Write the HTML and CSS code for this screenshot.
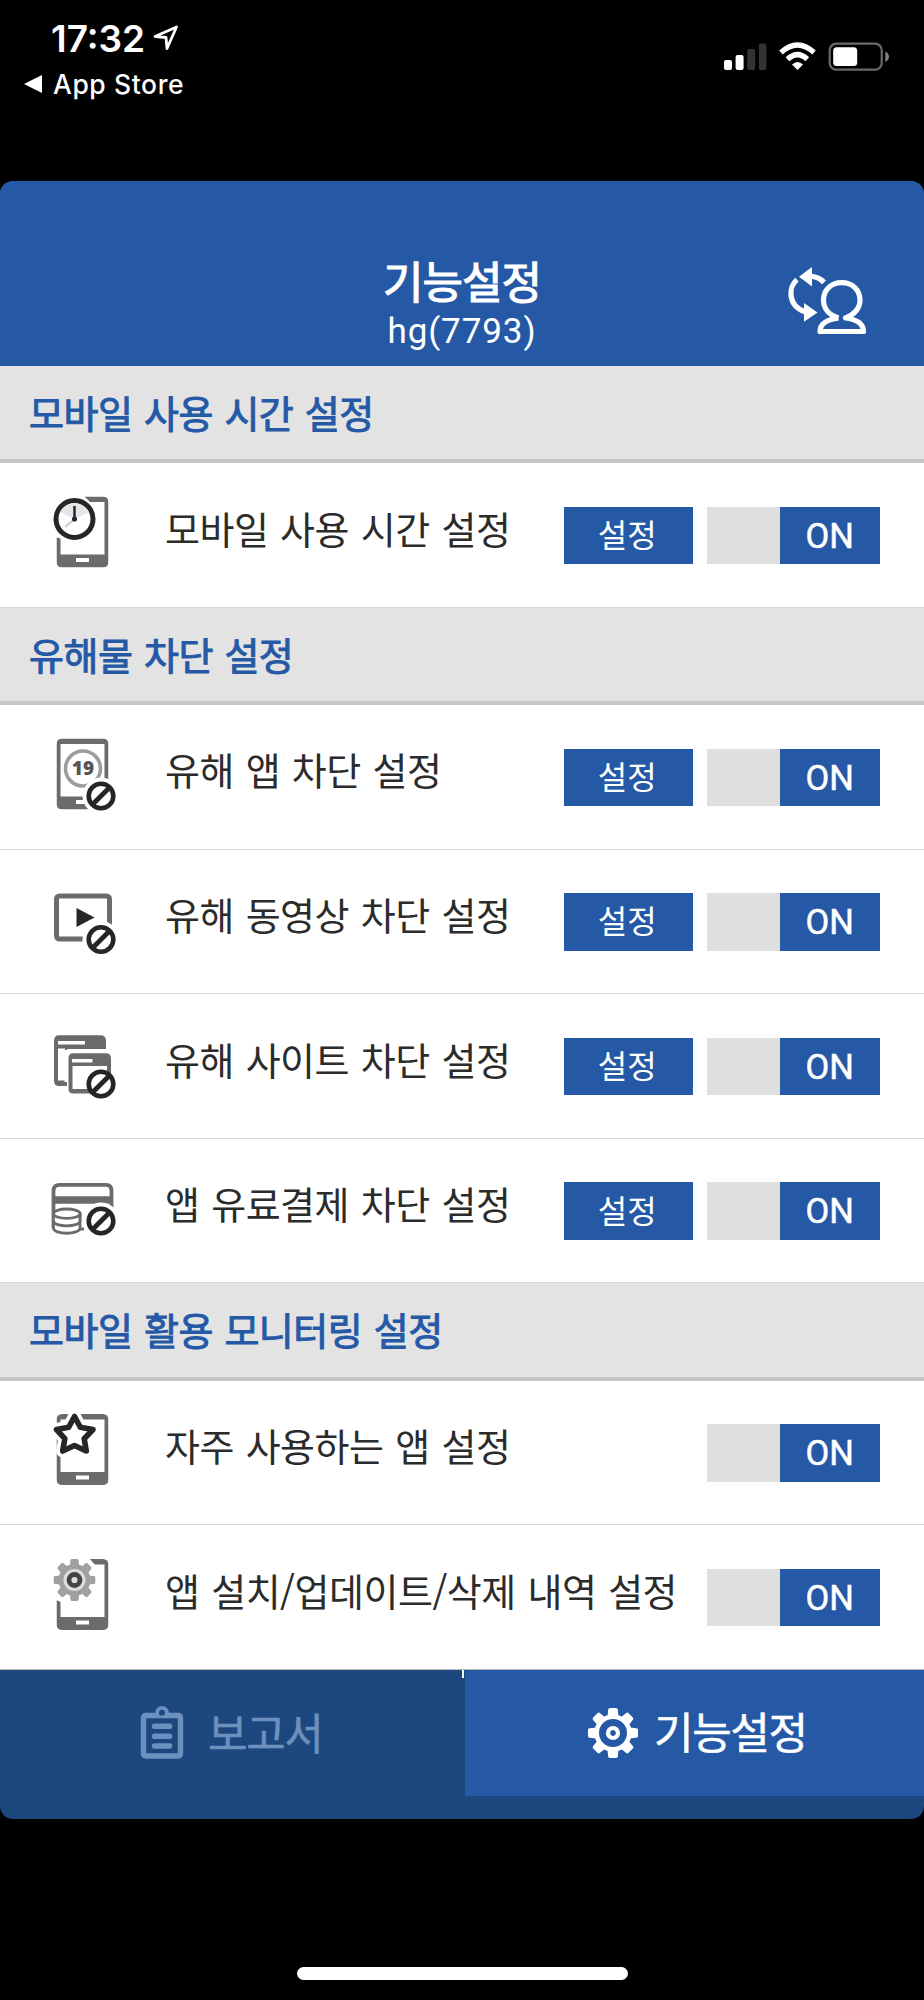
FILE: index.html
```html
<!DOCTYPE html>
<html lang="ko">
<head>
    <meta charset="UTF-8">
    <meta name="viewport" content="width=device-width, initial-scale=1.0">
    <title>기능설정</title>
    <link rel="stylesheet" href="styles.css">
</head>
<body>
    <!-- Shared icon parts -->
    <svg class="defs" width="0" height="0">
        <symbol id="phone" viewBox="0 0 52 71">
            <path fill="#6b6b6b" fill-rule="evenodd" d="M6 0H46Q52 0 52 6V65Q52 71 46 71H6Q0 71 0 65V6Q0 0 6 0ZM4 5.5V58H48V5.5ZM19.5 61.5V65.5H32.5V61.5Z"/>
        </symbol>
        <symbol id="ban" viewBox="0 0 38 38">
            <circle cx="19" cy="19" r="18.5" fill="#fff"/>
            <circle cx="19" cy="19" r="12.3" fill="#fff" stroke="#262626" stroke-width="4.6"/>
            <path d="M10.5 27.5L27.5 10.5" stroke="#262626" stroke-width="4.8"/>
        </symbol>
        <symbol id="teeth" viewBox="-25 -25 50 50">
            <path id="tooth" d="M-5.5 -16L-4.8 -23.5Q-4.5 -25 -3 -25H3Q4.5 -25 4.8 -23.5L5.5 -16Z"/>
            <use href="#tooth" transform="rotate(45)"/>
            <use href="#tooth" transform="rotate(90)"/>
            <use href="#tooth" transform="rotate(135)"/>
            <use href="#tooth" transform="rotate(180)"/>
            <use href="#tooth" transform="rotate(225)"/>
            <use href="#tooth" transform="rotate(270)"/>
            <use href="#tooth" transform="rotate(315)"/>
        </symbol>
    </svg>

    <!-- Status bar -->
    <div class="status">
        <div class="status-left">
            <div class="clock">
                <span>17:32</span>
                <svg width="26" height="26" viewBox="0 0 26 26"><path d="M2 11.5L23.5 2L14 23.5L13 12.5Z" fill="none" stroke="#fff" stroke-width="2.8" stroke-linejoin="round"/></svg>
            </div>
            <div class="back">
                <svg width="18" height="18" viewBox="0 0 18 18"><path d="M0 9L18 0V18Z" fill="#fff"/></svg>
                <span>App Store</span>
            </div>
        </div>
        <svg class="status-icons" width="166" height="30" viewBox="724 42 166 30">
            <rect x="724" y="60" width="8" height="10" rx="2" fill="#fff"/>
            <rect x="735.6" y="55" width="8" height="15" rx="2" fill="#fff"/>
            <rect x="747.2" y="49" width="8" height="21" rx="2" fill="#333"/>
            <rect x="758.8" y="43.5" width="7.6" height="26.5" rx="2" fill="#333"/>
            <path d="M781 52.5Q797.5 37.5 814 52.5M787.5 59.3Q797.5 50 807.3 59.3" fill="none" stroke="#fff" stroke-width="5.4"/>
            <path d="M792 64.5Q797.5 59.5 803 64.5L797.5 70Z" fill="#fff"/>
            <rect x="829.7" y="43.7" width="52" height="26" rx="6.5" fill="none" stroke="#6a6a6a" stroke-width="2.2"/>
            <rect x="833.2" y="47.3" width="24" height="18.8" rx="3.5" fill="#fff"/>
            <path d="M885.3 51.5Q889 53.5 889 56.7Q889 60 885.3 62Z" fill="#808080"/>
        </svg>
    </div>

    <div class="app">
        <header class="header">
            <h1>기능설정</h1>
            <p>hg(7793)</p>
            <svg class="switch-user" width="82" height="70" viewBox="786 266 82 70">
                <g fill="none" stroke="#fff" stroke-width="5.2">
                    <path d="M797 279.7C788.5 286.4 787 305.2 805 311.9"/>
                    <path d="M809 276.5Q818 276 824 282.4"/>
                    <path stroke-linejoin="round" d="M838.5 318C829 315 823.5 308.3 823.5 300.3C823.5 290 831 282.7 841.7 282.7C852.5 282.7 860 290 860 300.3C860 308.3 854 315 845.5 318C857 319.5 863.5 323.5 863.5 331.5H820C820 323.5 827 319.5 838.5 318"/>
                </g>
                <path fill="#fff" d="M799 276.7L812 267V286.5ZM817.5 312.4L804 303V321.8Z"/>
            </svg>
        </header>

        <h2 class="section">모바일 사용 시간 설정</h2>
        <div class="row">
            <svg class="icon" width="70" height="80" viewBox="0 0 70 80">
                <use href="#phone" x="6.5" y=".5" width="52" height="71"/>
                <path d="M0 0H34L42 8L41 30L24 46L5 41H0Z" fill="#fff"/>
                <circle cx="24.5" cy="23" r="18.5" fill="#fff" stroke="#262626" stroke-width="5"/>
                <path d="M24.5 23L10 16Q15 7.5 24.5 7.5T39 16Z" fill="#e6e6e6"/>
                <path d="M24.5 23L15 31" stroke="#ccc" stroke-width="2"/>
                <path d="M24.5 10V23" stroke="#262636" stroke-width="2.5"/>
                <circle cx="24.5" cy="23" r="2.6" fill="#262636"/>
            </svg>
            <span class="label">모바일 사용 시간 설정</span>
            <button class="set">설정</button>
            <div class="toggle"><span>ON</span></div>
        </div>

        <h2 class="section">유해물 차단 설정</h2>
        <div class="row">
            <svg class="icon" width="70" height="80" viewBox="0 0 70 80">
                <use href="#phone" x="6.5" y="1.5" width="52" height="71"/>
                <circle cx="33" cy="31.5" r="17.5" fill="none" stroke="#9c9c9c" stroke-width="3.6"/>
                <text class="age" x="33" y="38">19</text>
                <use href="#ban" x="32" y="40" width="38" height="38"/>
            </svg>
            <span class="label">유해 앱 차단 설정</span>
            <button class="set">설정</button>
            <div class="toggle"><span>ON</span></div>
        </div>
        <div class="row">
            <svg class="icon" width="70" height="80" viewBox="0 0 70 80">
                <rect x="6.5" y="14" width="53" height="43" rx="3" fill="none" stroke="#6b6b6b" stroke-width="5"/>
                <path d="M26.5 26L44.5 35.5L26.5 45Z" fill="#262626"/>
                <use href="#ban" x="32" y="38.5" width="38" height="38"/>
            </svg>
            <span class="label">유해 동영상 차단 설정</span>
            <button class="set">설정</button>
            <div class="toggle"><span>ON</span></div>
        </div>
        <div class="row">
            <svg class="icon" width="70" height="80" viewBox="0 0 70 80">
                <path fill="#6b6b6b" fill-rule="evenodd" d="M9 8.3H50.5Q56 8.3 56 14V22H17V59H9Q4 59 4 53.5V14Q4 8.3 9 8.3ZM8 21.5V53.5H15V21.5ZM8 14V17.5H35V14Z"/>
                <rect x="14.5" y="23" width="50" height="32" fill="#fff"/>
                <path fill="#6b6b6b" fill-rule="evenodd" d="M23 26.3H56Q61 26.3 61 31.5V61.5Q61 66.5 56 66.5H23Q18.5 66.5 18.5 61.5V31.5Q18.5 26.3 23 26.3ZM22.5 39V62H57V39ZM22 32V35.5H42.5V32Z"/>
                <circle cx="51" cy="57" r="12.3" fill="#fff" stroke="#262626" stroke-width="4.6"/>
                <path d="M42.5 65.5L59.5 48.5" stroke="#262626" stroke-width="4.8"/>
            </svg>
            <span class="label">유해 사이트 차단 설정</span>
            <button class="set">설정</button>
            <div class="toggle"><span>ON</span></div>
        </div>
        <div class="row">
            <svg class="icon" width="70" height="80" viewBox="0 0 70 80">
                <path d="M3.5 57V20Q3.5 13.8 9.5 13.8H56Q61.5 13.8 61.5 20V42" fill="none" stroke="#6b6b6b" stroke-width="3.8"/>
                <path d="M3 25.2H62V32.7H3Z" fill="#6b6b6b"/>
                <path d="M28 58H34" stroke="#6b6b6b" stroke-width="3"/>
                <g fill="#fff" stroke="#6b6b6b" stroke-width="2.8">
                    <path d="M3.5 43V57C3.5 64 30 64 30 57V43"/>
                    <path d="M3.5 50C3.5 56.5 30 56.5 30 50V43H3.5Z"/>
                    <ellipse cx="16.8" cy="42.7" rx="13.3" ry="4.7"/>
                </g>
                <use href="#ban" x="32" y="31" width="38" height="38"/>
            </svg>
            <span class="label">앱 유료결제 차단 설정</span>
            <button class="set">설정</button>
            <div class="toggle"><span>ON</span></div>
        </div>

        <h2 class="section">모바일 활용 모니터링 설정</h2>
        <div class="row">
            <svg class="icon" width="70" height="80" viewBox="0 0 70 80">
                <use href="#phone" x="6.5" y="1" width="52" height="71"/>
                <path d="M24.5 3.5L30.3 14.3L43 16.5L34.2 25.7L36.3 38L24.5 32.5L12.7 38L14.8 25.7L6.5 16.5L18.7 14.3Z" fill="#fff" stroke="#fff" stroke-width="13" stroke-linejoin="round"/>
                <path d="M24.5 3.5L30.3 14.3L43 16.5L34.2 25.7L36.3 38L24.5 32.5L12.7 38L14.8 25.7L6.5 16.5L18.7 14.3Z" fill="#fff" stroke="#262626" stroke-width="5.6" stroke-linejoin="round"/>
            </svg>
            <span class="label">자주 사용하는 앱 설정</span>
            <div class="toggle"><span>ON</span></div>
        </div>
        <div class="row">
            <svg class="icon" width="70" height="80" viewBox="0 0 70 80">
                <use href="#phone" x="6.5" y="1" width="52" height="71"/>
                <path d="M0 0H39L46 8V30L26 46L13 45L4 41H0Z" fill="#fff"/>
                <use href="#teeth" x="3.5" y="1" width="42" height="42" fill="#a0a0a0"/>
                <circle cx="24.5" cy="22" r="13.5" fill="#ddd" stroke="#a0a0a0" stroke-width="5"/>
                <circle cx="24.5" cy="22" r="5.5" fill="#ddd" stroke="#444" stroke-width="4.8"/>
            </svg>
            <span class="label">앱 설치/업데이트/삭제 내역 설정</span>
            <div class="toggle"><span>ON</span></div>
        </div>

        <!-- Bottom tabs -->
        <nav class="tabs">
            <a class="tab">
                <svg width="44" height="54" viewBox="140 1706 44 54">
                    <rect x="143.5" y="1715.5" width="37" height="40.5" rx="2" fill="none" stroke="#6c91be" stroke-width="5.4"/>
                    <path d="M155 1715V1713A7 7 0 0 1 169 1713V1715Z" fill="#6c91be"/>
                    <circle cx="162" cy="1712.7" r="3" fill="#1d477f"/>
                    <path d="M154.5 1726.3H169.5M154.5 1736.2H169.5M154.5 1746H169.5" stroke="#6c91be" stroke-width="5.6" stroke-linecap="round"/>
                </svg>
                <span>보고서</span>
            </a>
            <a class="tab active">
                <svg width="50" height="50" viewBox="-25 -25 50 50">
                    <use href="#teeth" x="-25" y="-25" width="50" height="50" fill="#fff"/>
                    <circle r="16.3" fill="#2559a6" stroke="#fff" stroke-width="4.6"/>
                    <circle r="5" fill="none" stroke="#fff" stroke-width="4.2"/>
                </svg>
                <span>기능설정</span>
            </a>
        </nav>
    </div>

    <div class="home-bar"></div>
</body>
</html>
```
FILE: styles.css
```css
body {
    margin: 0;
    height: 2000px;
    background-color: #000;
    font-family: "Noto Sans CJK KR", sans-serif;
    overflow: hidden;
}

.defs {
    display: block;
}

/* Status bar */
.status {
    display: flex;
    justify-content: space-between;
    align-items: flex-start;
    height: 180.5px;
    padding: 0 34px 0 24px;
    box-sizing: border-box;
    color: #fff;
    font-family: Inter, sans-serif;
}

.clock {
    display: flex;
    align-items: center;
    gap: 8px;
    height: 40px;
    margin-top: 18px;
    padding-left: 27px;
    font-size: 37px;
    font-weight: 600;
}

.back {
    display: flex;
    align-items: center;
    gap: 11px;
    height: 30px;
    margin-top: 11px;
    font-size: 26.5px;
    font-weight: 500;
    letter-spacing: 0.6px;
}

.status-icons {
    margin-top: 42px;
}

.app {
    height: 1638.5px;
    border-radius: 13px;
    background-color: #1d477f;
    overflow: hidden;
}

.header {
    position: relative;
    height: 185.5px;
    padding-top: 69px;
    box-sizing: border-box;
    background-color: #2559a6;
    color: #fff;
    text-align: center;
}

.header h1 {
    margin: 0;
    height: 61px;
    line-height: 60px;
    font-size: 44px;
    font-weight: 400;
    letter-spacing: -1px;
    -webkit-text-stroke: 1.2px #fff;
}

.header p {
    margin: 0;
    height: 42px;
    line-height: 42px;
    font-family: Roboto, sans-serif;
    font-size: 35px;
    font-weight: 400;
    letter-spacing: 0.9px;
}

.switch-user {
    position: absolute;
    left: 786px;
    top: 85.5px;
}

.section {
    height: 97.25px;
    margin: 0;
    padding-left: 29px;
    box-sizing: border-box;
    border-bottom: 4px solid #c6c6c6;
    background-color: #e3e3e3;
    color: #2559a6;
    font-size: 38px;
    font-weight: 400;
    letter-spacing: -0.5px;
    word-spacing: 1.4px;
    line-height: 92px;
    -webkit-text-stroke: 1px #2559a6;
}

.row {
    display: flex;
    align-items: center;
    height: 144.6px;
    padding: 1px 44px 0 50px;
    box-sizing: border-box;
    border-bottom: 1px solid #d8d8d8;
    background-color: #fff;
}

.row:nth-last-child(2) {
    border-bottom-color: #b5b5b8;
}

.icon {
    flex: none;
    margin-right: 45px;
}

.age {
    font-family: "Open Sans", sans-serif;
    font-size: 19px;
    font-weight: 800;
    fill: #555;
    text-anchor: middle;
}

.label {
    flex: 1;
    padding-bottom: 16px;
    color: #2b2b2b;
    font-size: 38px;
    letter-spacing: -0.5px;
    word-spacing: 1.6px;
    line-height: 50px;
    white-space: nowrap;
}

.set {
    width: 129.5px;
    height: 57.5px;
    margin: 0 14px 0 0;
    padding: 0 2px 4px 0;
    border: none;
    background-color: #2559a6;
    color: #fff;
    font-family: inherit;
    font-size: 32px;
    line-height: 53px;
}

.toggle {
    display: flex;
    justify-content: flex-end;
    width: 173px;
    height: 57.5px;
    background-color: #dfdfdf;
}

.toggle span {
    width: 100.5px;
    background-color: #2559a6;
    color: #fff;
    font-family: Roboto, sans-serif;
    font-size: 34.5px;
    font-weight: 400;
    line-height: 59px;
    text-align: center;
    -webkit-text-stroke: 0.5px #fff;
}

/* Bottom tabs */
.tabs {
    display: flex;
    align-items: flex-start;
}

.tab {
    display: flex;
    align-items: center;
    height: 126.5px;
    box-sizing: border-box;
    color: #6c91be;
    font-size: 43px;
    letter-spacing: -1.4px;
}

.tab:first-child {
    position: relative;
    width: 465px;
    padding-left: 140px;
    gap: 24px;
}

.tab:first-child span {
    padding-bottom: 4px;
}

/* divider tick between the tabs */
.tab:first-child::after {
    content: "";
    position: absolute;
    top: 0;
    right: 1px;
    width: 2px;
    height: 8px;
    background-color: #fff;
}

.tab.active {
    flex: 1;
    padding-left: 123px;
    gap: 16px;
    background-color: #2559a6;
    color: #fff;
}

.tab span {
    padding-bottom: 6px;
    line-height: 60px;
    -webkit-text-stroke: 0.5px currentColor;
}

.home-bar {
    width: 331px;
    height: 13px;
    margin: 148px auto 0;
    border-radius: 7px;
    background-color: #fff;
}
```
